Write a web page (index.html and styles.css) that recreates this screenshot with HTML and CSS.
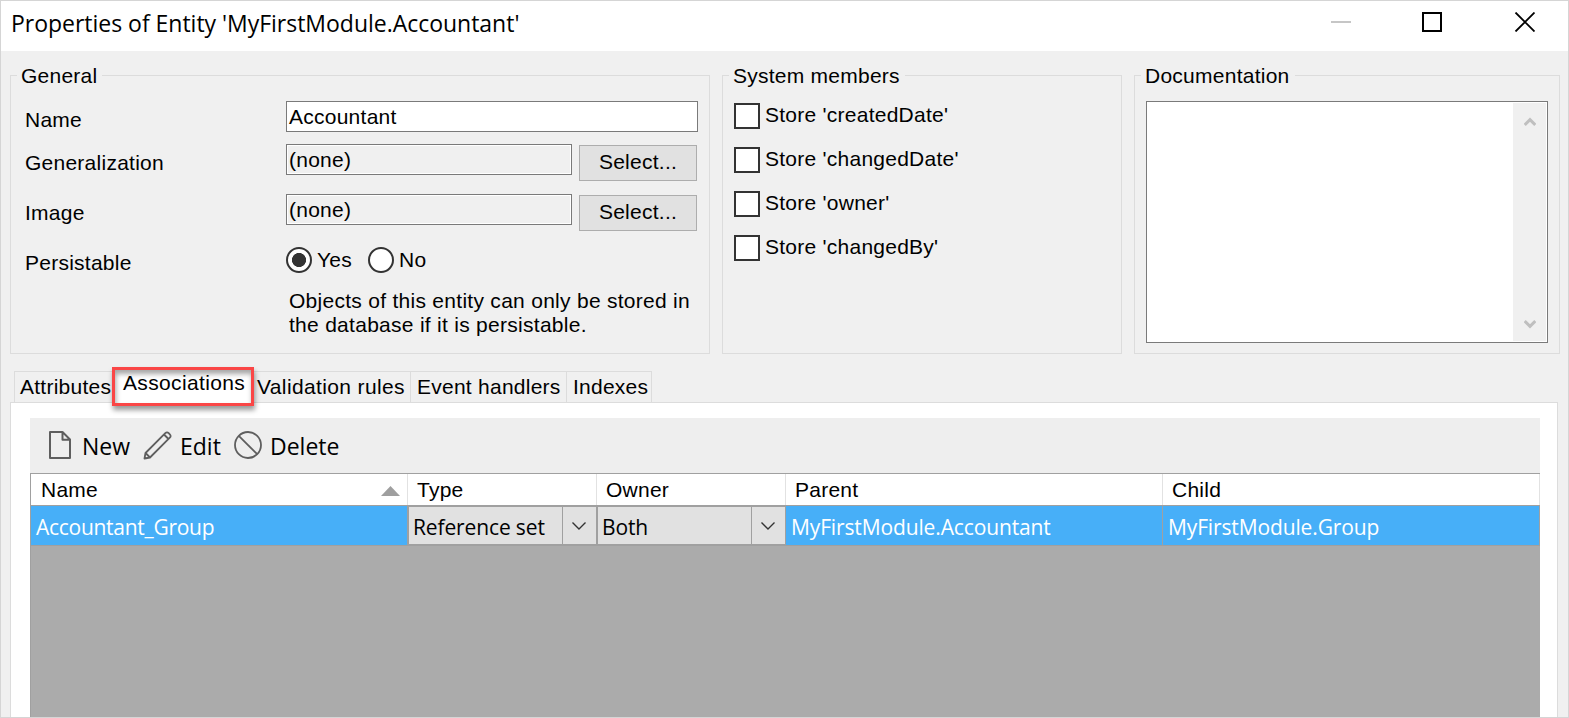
FILE: index.html
```
<!DOCTYPE html>
<html lang="en">
<head>
<meta charset="utf-8">
<title>Properties of Entity</title>
<link rel="stylesheet" href="styles.css">
</head>
<body>
<div class="window">
  <header class="titlebar">
    <h1 class="title">Properties of Entity 'MyFirstModule.Accountant'</h1>
    <svg class="controls" width="204" height="20" viewBox="0 0 204 20" fill="none">
      <path d="M0 10h20" stroke="#c6c6c6" stroke-width="2"/>
      <path d="M92 1h18v18H92z" stroke="#000" stroke-width="2"/>
      <path d="M184.500 .5l19 19M203.500 .5l-19 19" stroke="#000" stroke-width="1.800"/>
    </svg>
  </header>

  <div class="groups">
    <section class="group general">
      <h2 class="legend">General</h2>
      <div class="form">
        <label class="label">Name</label>
        <div class="input">Accountant</div>
        <label class="label">Generalization</label>
        <div class="picker"><div class="input readonly">(none)</div><button class="button">Select...</button></div>
        <label class="label">Image</label>
        <div class="picker"><div class="input readonly">(none)</div><button class="button">Select...</button></div>
        <label class="label">Persistable</label>
        <div class="radios">
          <span class="radio checked"></span><span class="radio-text yes">Yes</span>
          <span class="radio"></span><span class="radio-text">No</span>
        </div>
        <p class="hint">Objects of this entity can only be stored in<br>the database if it is persistable.</p>
      </div>
    </section>

    <section class="group system">
      <h2 class="legend">System members</h2>
      <div class="checks">
        <div class="check"><span class="box"></span><span class="check-text">Store 'createdDate'</span></div>
        <div class="check"><span class="box"></span><span class="check-text">Store 'changedDate'</span></div>
        <div class="check"><span class="box"></span><span class="check-text">Store 'owner'</span></div>
        <div class="check"><span class="box"></span><span class="check-text">Store 'changedBy'</span></div>
      </div>
    </section>

    <section class="group docs">
      <h2 class="legend">Documentation</h2>
      <div class="textarea">
        <div class="scrollbar">
          <svg width="12" height="10" viewBox="0 0 12 10" fill="none" stroke="#bfbfbf" stroke-width="3"><path d="M.7 8L6 2.700 11.300 8"/></svg>
          <svg width="12" height="10" viewBox="0 0 12 10" fill="none" stroke="#bfbfbf" stroke-width="3"><path d="M.7 2L6 7.300 11.300 2"/></svg>
        </div>
      </div>
    </section>
  </div>

  <nav class="tabs">
    <div class="tab attributes">Attributes</div>
    <div class="tab selected">Associations</div>
    <div class="tab validation">Validation rules</div>
    <div class="tab events">Event handlers</div>
    <div class="tab indexes">Indexes</div>
  </nav>

  <main class="panel">
    <div class="toolbar">
      <svg class="icon" width="24" height="28" viewBox="0 0 24 28" fill="none" stroke="#5e5e5e" stroke-width="2" stroke-linejoin="round"><path d="M2 1h12.500L22 8.500V27H2zM14.500 1v7.700H22"/></svg>
      <span class="tool new">New</span>
      <svg class="icon" width="30" height="30" viewBox="0 0 30 30" fill="none" stroke="#5e5e5e" stroke-width="1.800" stroke-linejoin="round"><path d="M1.500 27.500L2.500 22 22.300 2.200q1.700-1.700 3.400 0l1.100 1.100q1.700 1.700 0 3.400L7 26.500zM2.500 22l4.500 4.500M21 3.500l4.500 4.500"/></svg>
      <span class="tool edit">Edit</span>
      <svg class="icon" width="28" height="28" viewBox="0 0 28 28" fill="none" stroke="#5e5e5e" stroke-width="1.800"><circle cx="14" cy="14" r="13"/><path d="M4.800 4.800l18.400 18.400"/></svg>
      <span class="tool delete">Delete</span>
    </div>
    <div class="grid">
      <div class="row head">
        <div class="cell sorted">
          <span class="head-text">Name</span>
          <svg width="19" height="10" viewBox="0 0 19 10"><path d="M9.500 0L19 10H0z" fill="#9f9f9f"/></svg>
        </div>
        <div class="cell"><span class="head-text">Type</span></div>
        <div class="cell"><span class="head-text">Owner</span></div>
        <div class="cell"><span class="head-text">Parent</span></div>
        <div class="cell"><span class="head-text">Child</span></div>
      </div>
      <div class="row data">
        <div class="cell"><span class="data-text group-name">Accountant_Group</span></div>
        <div class="combo">
          <span class="combo-text">Reference set</span>
          <span class="drop"><svg width="14" height="8" viewBox="0 0 14 8" fill="none" stroke="#333" stroke-width="1.400"><path d="M.5 .5L7 7 13.500 .5"/></svg></span>
        </div>
        <div class="combo">
          <span class="combo-text">Both</span>
          <span class="drop"><svg width="14" height="8" viewBox="0 0 14 8" fill="none" stroke="#333" stroke-width="1.400"><path d="M.5 .5L7 7 13.500 .5"/></svg></span>
        </div>
        <div class="cell"><span class="data-text">MyFirstModule.Accountant</span></div>
        <div class="cell"><span class="data-text">MyFirstModule.Group</span></div>
      </div>
    </div>
  </main>
</div>
</body>
</html>
```
FILE: styles.css
```
* { box-sizing: border-box; }
body {
  margin: 0;
  background: #fff;
  color: #000;
  font: 21px/24px "Liberation Sans", Arial, sans-serif;
  letter-spacing: 0.25px;
  white-space: nowrap;
}
h1, h2, p { margin: 0; font-weight: normal; }
svg { display: block; flex: none; }

.window {
  width: 1569px;
  height: 718px;
  border: 1px solid #d5d5d5;
  background: #f0f0f0;
  overflow: hidden;
  display: flex;
  flex-direction: column;
}
.titlebar {
  height: 50px;
  flex: none;
  background: #fff;
  display: flex;
  justify-content: space-between;
  padding: 11px 33px 0 10px;
}
.title { font: 23px/24px "Open Sans", sans-serif; letter-spacing: -0.02px; margin-top: -1px; }

.groups { display: flex; padding: 24px 0 0 9px; height: 303px; flex: none; }
.group { border: 1px solid #dcdcdc; height: 279px; }
.general { width: 700px; margin-right: 12px; }
.system { width: 400px; margin-right: 12px; }
.docs { width: 426px; }
.legend {
  width: fit-content;
  font-size: 21px;
  line-height: 24px;
  background: #f0f0f0;
  margin: -12px 0 0 6px;
  padding: 0 5px 0 4px;
}

.form {
  display: grid;
  grid-template-columns: 261px 412px;
  grid-template-rows: 43px 50px 50px 45px 48px;
  padding: 13px 0 0 14px;
}
.label { padding-top: 7px; }
.input {
  height: 31px;
  border: 1px solid #7a7a7a;
  background: #fff;
  padding: 3px 0 0 2px;
}
.readonly { width: 286px; background: #f0f0f0; box-shadow: inset 0 0 0 1px #fff; }
.picker { display: flex; gap: 7px; }
.button {
  width: 118px;
  height: 36px;
  margin-top: 1px;
  padding: 0 0 3px;
  border: 1px solid #adadad;
  background: #e1e1e1;
  color: inherit;
  font: inherit;
  letter-spacing: inherit;
}
.radios { display: flex; padding-top: 3px; }
.radio {
  width: 26px;
  height: 26px;
  border: 2px solid #333;
  border-radius: 50%;
  background: #fff;
}
.checked { background: radial-gradient(circle, #333 6.700px, #fff 7.400px); }
.radio-text { margin-left: 5px; padding-top: 1px; }
.yes { width: 51px; }
.hint { grid-column: 2; padding-left: 3px; letter-spacing: 0.28px; }

.checks { padding: 15px 0 0 11px; display: grid; gap: 18px; }
.check { display: flex; gap: 5px; height: 26px; }
.box { width: 26px; height: 26px; border: 2px solid #333; background: #fff; }

.textarea {
  width: 402px;
  height: 242px;
  margin: 13px 0 0 11px;
  padding: 1px;
  border: 1px solid #7a7a7a;
  background: #fff;
  display: flex;
  justify-content: flex-end;
}
.scrollbar {
  width: 33px;
  background: #f0f0f0;
  display: flex;
  flex-direction: column;
  justify-content: space-between;
  align-items: center;
  padding: 14px 0 12px;
}

.tabs { display: flex; height: 49px; padding: 17px 0 0 13px; flex: none; }
.tab {
  height: 32px;
  border: 1px solid #dcdcdc;
  border-bottom: 0;
  border-left-width: 0;
  padding: 3px 0 0 6px;
}
.attributes { width: 98px; border-left-width: 1px; border-right: 0; padding-left: 5px; }
.selected {
  position: relative;
  width: 142px;
  height: 39px;
  margin-top: -4px;
  border: 3px solid #fa4646;
  background: #fff;
  padding: 1px 0 0 8px;
  letter-spacing: 0.35px;
  box-shadow: 1px 4px 5px rgba(0,0,0,.4), inset 1px 4px 5px rgba(0,0,0,.35);
}
.validation { width: 157px; padding-left: 3px; letter-spacing: 0.37px; }
.events { width: 156px; }
.indexes { width: 85px; }

.panel {
  width: 1548px;
  margin: -1px 0 0 9px;
  flex: 1;
  background: #fff;
  border: 1px solid #dcdcdc;
  border-bottom: 0;
  padding: 15px 17px 0 19px;
  display: flex;
  flex-direction: column;
}
.toolbar {
  height: 55px;
  flex: none;
  background: #eee;
  display: flex;
  align-items: flex-start;
  padding: 13px 0 0 18px;
}
.tool { font: 23px/30px "Open Sans", sans-serif; letter-spacing: 0; }
.new { width: 61px; margin-left: 10px; }
.edit { width: 54px; margin-left: 7px; }
.delete { margin-left: 8px; }

.grid {
  flex: 1;
  background: #ababab;
  border-top: 1px solid #a0a0a0;
  border-left: 1px solid #a0a0a0;
}
.row { display: grid; grid-template-columns: 377px 189px 189px 377px 377px; }
.head { height: 32px; background: #fff; border-bottom: 1px solid #a0a0a0; }
.head .cell { border-right: 1px solid #e2e2e2; padding: 4px 0 0 9px; }
.head .sorted { display: flex; justify-content: space-between; padding: 4px 7px 0 10px; }
.sorted svg { margin-top: 8px; }
.data { height: 40px; background: #47aff8; color: #fff; border-bottom: 1px solid #a0a0a0; }
.data .cell { border-right: 1px solid #a0a0a0; padding: 6px 0 0 5px; }
.data-text, .combo-text { font: 21px/30px "Open Sans", sans-serif; letter-spacing: -0.13px; }
.group-name { letter-spacing: -0.28px; }
.combo {
  display: flex;
  height: 39px;
  border: 1px solid #a0a0a0;
  background: #e1e1e1;
  color: #000;
}
.combo-text { flex: 1; padding: 5px 0 0 4px; }
.drop { width: 34px; border-left: 1px solid #a0a0a0; padding: 15px 0 0 9px; }
```
